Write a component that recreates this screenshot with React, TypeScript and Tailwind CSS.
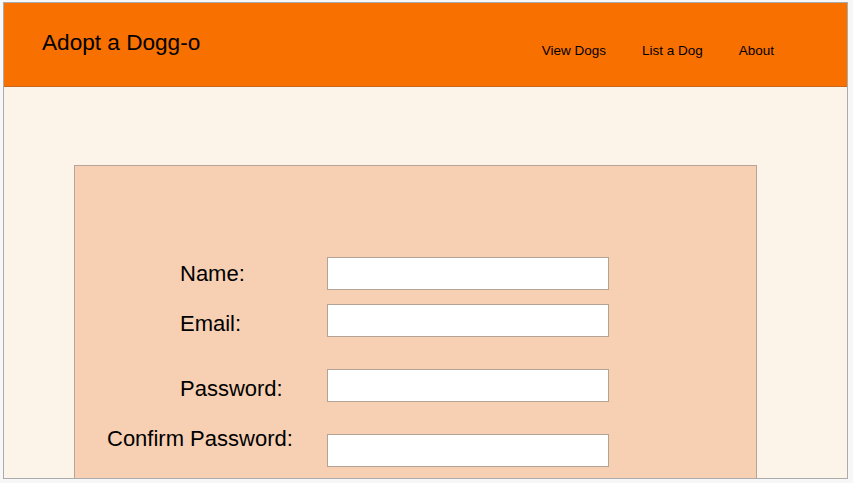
const fields = [
  { label: "Name:", labelPad: "pl-[105px]", labelTop: "mt-[6px]", inputTop: "mt-0", rowGap: "mt-0" },
  { label: "Email:", labelPad: "pl-[105px]", labelTop: "mt-[9px]", inputTop: "mt-0", rowGap: "mt-[14px]" },
  { label: "Password:", labelPad: "pl-[105px]", labelTop: "mt-[9px]", inputTop: "mt-0", rowGap: "mt-[32px]" },
  { label: "Confirm Password:", labelPad: "pl-[32px]", labelTop: "mt-0", inputTop: "mt-[6px]", rowGap: "mt-[26px]" },
];

function NavLink({ children }: { children: React.ReactNode }) {
  return (
    <a href="#" className="text-[13.5px] leading-[13px] text-black">
      {children}
    </a>
  );
}

export default function App() {
  return (
    <div
      className="w-[853px] h-[483px] bg-[#f7f7f7] pt-[2px] pl-[3px]"
      style={{ fontFamily: '"Liberation Sans", Arial, sans-serif' }}
    >
      <div className="w-[845px] h-[477px] border border-[#ababab] bg-[#fcf4e9] overflow-hidden">
        <header className="h-[84px] bg-[#f77000] border-b border-[#c8681e] flex items-start">
          <h1 className="ml-[38px] mt-[28.5px] text-[22.6px] leading-[22px] text-black font-normal">
            Adopt a Dogg-o
          </h1>
          <nav className="ml-auto mr-[73px] mt-[41px] flex gap-[36px] items-start">
            <NavLink>View Dogs</NavLink>
            <NavLink>List a Dog</NavLink>
            <NavLink>About</NavLink>
          </nav>
        </header>

        <main className="pt-[78px] pl-[70px]">
          <form className="w-[683px] h-[400px] bg-[#f7d0b3] border border-[#b8a597] pt-[91px]">
            {fields.map((f) => (
              <div key={f.label} className={`flex items-start ${f.rowGap}`}>
                <label
                  className={`w-[252px] shrink-0 text-[22px] leading-[22px] text-black ${f.labelPad} ${f.labelTop}`}
                >
                  {f.label}
                </label>
                <input
                  type={f.label.includes("Password") ? "password" : "text"}
                  className={`w-[282px] h-[33px] bg-white border border-[#b3a395] outline-none ${f.inputTop}`}
                />
              </div>
            ))}
          </form>
        </main>
      </div>
    </div>
  );
}
